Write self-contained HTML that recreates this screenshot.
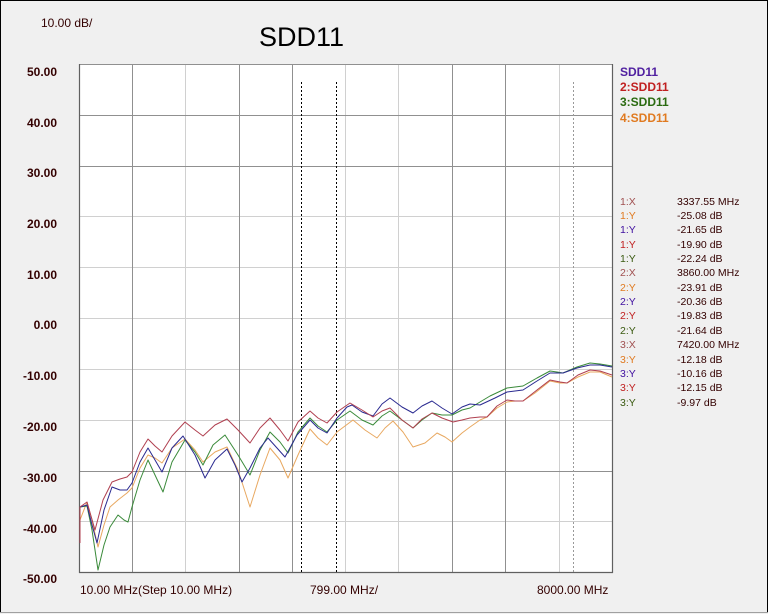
<!DOCTYPE html>
<html><head><meta charset="utf-8"><style>
html,body{margin:0;padding:0;background:#f0f0f0;}
svg{display:block;font-family:"Liberation Sans",Arial,sans-serif;}
</style></head><body>
<svg width="768" height="614" viewBox="0 0 768 614" xmlns="http://www.w3.org/2000/svg">
<rect x="0" y="0" width="768" height="614" fill="#f0f0f0"/>
<path d="M0.5 613 V0.5 H767.5 V613" fill="none" stroke="#000" stroke-width="1"/>
<line x1="0" y1="612.5" x2="768" y2="612.5" stroke="#a0a0a0"/>
<text x="41" y="27" font-size="12" fill="#300">10.00 dB/</text>
<text x="259" y="46" font-size="27" fill="#000">SDD11</text>
<rect x="79" y="64" width="533" height="508" fill="#fff"/>
<g stroke="#d0d0d0" stroke-width="1">
<line x1="185.5" y1="64" x2="185.5" y2="572"/>
<line x1="345.5" y1="64" x2="345.5" y2="572"/>
<line x1="398.5" y1="64" x2="398.5" y2="572"/>
<line x1="559.5" y1="64" x2="559.5" y2="572"/>
<line x1="79" y1="216.5" x2="612" y2="216.5"/>
<line x1="79" y1="267.5" x2="612" y2="267.5"/>
<line x1="79" y1="318.5" x2="612" y2="318.5"/>
<line x1="79" y1="369.5" x2="612" y2="369.5"/>
<line x1="79" y1="420.5" x2="612" y2="420.5"/>
<line x1="79" y1="521.5" x2="612" y2="521.5"/>
</g>
<g stroke="#909090" stroke-width="1">
<line x1="132.5" y1="64" x2="132.5" y2="572"/>
<line x1="239.5" y1="64" x2="239.5" y2="572"/>
<line x1="292.5" y1="64" x2="292.5" y2="572"/>
<line x1="452.5" y1="64" x2="452.5" y2="572"/>
<line x1="505.5" y1="64" x2="505.5" y2="572"/>
<line x1="79" y1="64.5" x2="612" y2="64.5"/>
<line x1="79" y1="115.5" x2="612" y2="115.5"/>
<line x1="79" y1="166.5" x2="612" y2="166.5"/>
<line x1="79" y1="471.5" x2="612" y2="471.5"/>
</g>
<g stroke="#606060" stroke-width="1.2">
<line x1="79.5" y1="64" x2="79.5" y2="573"/>
<line x1="612.5" y1="64" x2="612.5" y2="573"/>
<line x1="79" y1="572.5" x2="613" y2="572.5"/>
</g>
<g stroke="#000" stroke-width="1" stroke-dasharray="2,2">
<line x1="301.5" y1="82" x2="301.5" y2="572"/>
<line x1="336.5" y1="82" x2="336.5" y2="572"/>
</g>
<line x1="573.5" y1="82" x2="573.5" y2="572" stroke="#999" stroke-dasharray="2,2"/>
<g fill="none" stroke-width="1" stroke-linejoin="round">
<polyline stroke="#e8a860" points="80,520 87,502 92,520 98,547 104,525 110,507 118,500 127,493 132,488 140,468 148,455 155,458 162,463 172,448 185,439 195,450 203,462 215,452 227,447 238,470 250,507 260,475 270,448 280,460 288,478 298,455 310,429 318,438 327,445 337,432 353,420 365,430 377,438 385,428 393,421 403,432 413,447 425,443 437,433 445,437 452,442 462,433 470,427 480,420 487,417 497,408 507,402 515,401 523,401 535,393 550,381 560,383 567,383 578,377 590,372 600,372 612,377"/>
<polyline stroke="#3a8a3a" points="80,507 87,506 92,530 98,570 104,545 110,527 118,515 124,520 128,522 132,507 140,480 148,460 155,475 163,492 172,462 185,440 195,452 203,465 213,445 225,435 238,455 250,475 260,450 270,432 280,442 288,453 298,432 310,418 318,426 327,432 337,420 350,411 362,420 373,425 382,416 390,411 402,420 413,428 422,420 432,413 442,415 452,415 462,410 470,408 480,402 490,396 507,388 515,387 523,386 537,378 550,371 557,372 563,373 577,367 590,363 600,364 612,366"/>
<polyline stroke="#2a2a90" points="80,507 87,505 92,525 97,543 104,510 112,487 120,490 127,490 132,483 140,462 148,448 155,460 162,472 172,448 183,436 195,455 205,478 215,460 227,449 235,465 242,482 250,468 260,448 268,438 277,448 285,457 297,435 310,420 318,428 327,433 337,418 347,407 352,405 362,412 373,416 382,404 390,398 402,407 413,413 422,406 432,401 442,408 452,414 462,407 470,404 480,405 495,398 507,392 515,391 523,390 537,381 550,373 557,373 563,373 577,368 590,365 600,365 612,367"/>
<polyline stroke="#b04050" points="80,543 80,507 87,502 95,530 103,500 112,482 120,479 127,477 132,472 140,452 148,439 155,446 162,452 172,436 185,422 195,430 203,436 215,425 227,419 238,430 250,443 260,428 270,418 280,430 288,441 298,422 310,411 318,418 327,423 337,412 350,403 362,410 373,417 382,411 390,408 402,420 413,428 422,419 432,413 442,418 453,422 462,420 470,418 480,417 487,417 497,406 507,400 515,401 523,401 537,390 550,380 560,382 567,383 578,375 590,370 600,371 612,375"/>
</g>
<g font-size="12" font-weight="bold" fill="#300" text-anchor="end">
<text x="57" y="76">50.00</text>
<text x="57" y="127">40.00</text>
<text x="57" y="177">30.00</text>
<text x="57" y="228">20.00</text>
<text x="57" y="279">10.00</text>
<text x="57" y="329">0.00</text>
<text x="57" y="380">-10.00</text>
<text x="57" y="431">-20.00</text>
<text x="57" y="482">-30.00</text>
<text x="57" y="533">-40.00</text>
<text x="57" y="583">-50.00</text>
</g>
<g font-size="12" fill="#300">
<text x="80" y="594">10.00 MHz(Step 10.00 MHz)</text>
<text x="310" y="594">799.00 MHz/</text>
<text x="537" y="594">8000.00 MHz</text>
</g>
<g font-size="12" font-weight="bold">
<text x="620" y="76" fill="#5020a0">SDD11</text>
<text x="620" y="91" fill="#c02020">2:SDD11</text>
<text x="620" y="106" fill="#2a6a10">3:SDD11</text>
<text x="620" y="122" fill="#e07a20">4:SDD11</text>
</g>
<g font-size="10.5">
<text x="620" y="205" fill="#a05050">1:X</text><text x="677" y="205" fill="#300">3337.55 MHz</text>
<text x="620" y="219" fill="#e07a20">1:Y</text><text x="677" y="219" fill="#300">-25.08 dB</text>
<text x="620" y="233" fill="#4010a0">1:Y</text><text x="677" y="233" fill="#300">-21.65 dB</text>
<text x="620" y="248" fill="#c02020">1:Y</text><text x="677" y="248" fill="#300">-19.90 dB</text>
<text x="620" y="262" fill="#3a5a10">1:Y</text><text x="677" y="262" fill="#300">-22.24 dB</text>
<text x="620" y="276" fill="#a05050">2:X</text><text x="677" y="276" fill="#300">3860.00 MHz</text>
<text x="620" y="291" fill="#e07a20">2:Y</text><text x="677" y="291" fill="#300">-23.91 dB</text>
<text x="620" y="305" fill="#4010a0">2:Y</text><text x="677" y="305" fill="#300">-20.36 dB</text>
<text x="620" y="319" fill="#c02020">2:Y</text><text x="677" y="319" fill="#300">-19.83 dB</text>
<text x="620" y="334" fill="#3a5a10">2:Y</text><text x="677" y="334" fill="#300">-21.64 dB</text>
<text x="620" y="348" fill="#a05050">3:X</text><text x="677" y="348" fill="#300">7420.00 MHz</text>
<text x="620" y="363" fill="#e07a20">3:Y</text><text x="677" y="363" fill="#300">-12.18 dB</text>
<text x="620" y="377" fill="#4010a0">3:Y</text><text x="677" y="377" fill="#300">-10.16 dB</text>
<text x="620" y="391" fill="#c02020">3:Y</text><text x="677" y="391" fill="#300">-12.15 dB</text>
<text x="620" y="406" fill="#3a5a10">3:Y</text><text x="677" y="406" fill="#300">-9.97 dB</text>
</g>
</svg>
</body></html>
